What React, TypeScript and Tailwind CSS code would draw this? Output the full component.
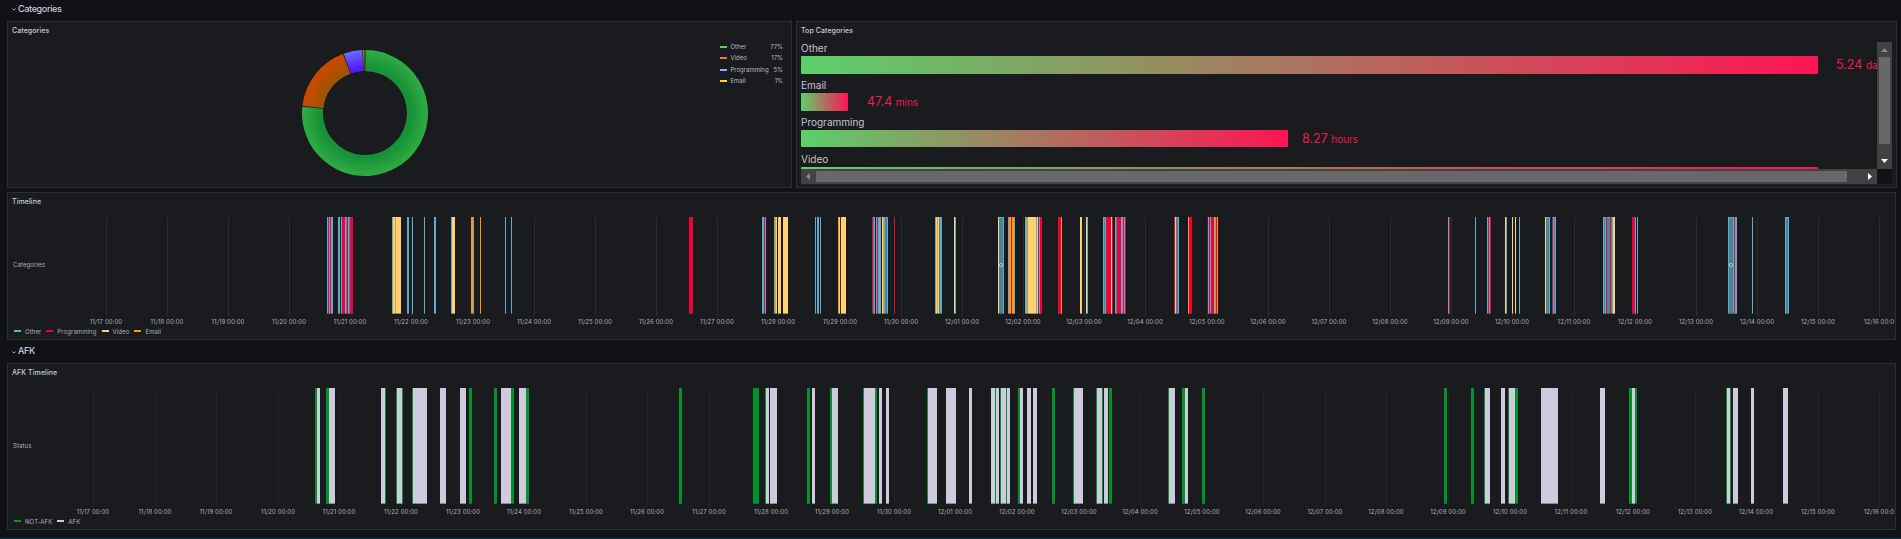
import React from "react";

type Run = [number, string];

const COLORS: Record<string, string> = {
  B: "#5dadcb",
  T: "#4a8597",
  R: "#f2003c",
  Y: "#ffd175",
  O: "#ff990a",
  G: "#00942b",
  W: "#d0cadf",
};

const DATES = [
  "11/17", "11/18", "11/19", "11/20", "11/21", "11/22", "11/23", "11/24", "11/25", "11/26",
  "11/27", "11/28", "11/29", "11/30", "12/01", "12/02", "12/03", "12/04", "12/05", "12/06",
  "12/07", "12/08", "12/09", "12/10", "12/11", "12/12", "12/13", "12/14", "12/15", "12/16",
];

const CATEGORY_TICKS = [
  106, 167, 228, 289, 350, 411, 473, 534, 595, 656, 717, 778, 840, 901, 962, 1023, 1084, 1145,
  1207, 1268, 1329, 1390, 1451, 1512, 1574, 1635, 1696, 1757, 1818, 1879,
];

const AFK_TICKS = [
  93, 155, 216, 278, 339, 401, 463, 524, 586, 647, 709, 771, 832, 894, 955, 1017, 1079, 1140,
  1202, 1263, 1325, 1386, 1448, 1510, 1571, 1633, 1695, 1756, 1818, 1879,
];

const CATEGORY_RUNS: Run[] = [
  [327, "BRBRB2"], [338, "B2"], [341, "BR3BTRBTR3"], [392, "BY2OY5"], [407, "B2"], [412, "B"],
  [424, "B"], [434, "B2"], [451, "BY3"], [471, "O2B"], [480, "O"], [505, "B"], [511, "B"],
  [689, "R4"], [762, "B2RB"], [774, "BOY"], [778, "Y3"], [783, "Y5"], [815, "B"], [817, "B2"],
  [820, "B"], [838, "OY"], [841, "Y5"], [872, "RTB"], [876, "BRB3"], [882, "YOBT2B"],
  [894, "R"], [935, "BYOYTB2"], [954, "YB"], [998, "YT4B"], [1008, "BO2RO2B"],
  [1025, "BOBY8BYRBR2"], [1058, "R3O"], [1080, "Y2"], [1086, "YB"], [1103, "BTBR5YR"],
  [1115, "BTR4B2RBR"], [1174, "RYT2B"], [1188, "OR3"], [1208, "BRBR3OBRO"], [1448, "BR"],
  [1475, "B"], [1487, "BRBR"], [1505, "YB"], [1512, "Y"], [1515, "Y"], [1519, "B"],
  [1545, "YT3B"], [1552, "RBTB"], [1603, "BTBRT3RTBY2"], [1632, "R3B"], [1637, "B"],
  [1728, "BT4BRB2"], [1752, "B"], [1785, "BT2B"],
];

const AFK_RUNS: Run[] = [
  [315, "G2W3"], [326, "G3W6"], [381, "W4G"], [396, "GW5G"], [412, "GW14"], [440, "W6"],
  [460, "W6"], [469, "G3"], [494, "G3"], [501, "W10G3"], [519, "W7G3"], [679, "G3"],
  [753, "G6"], [765, "GW3"], [770, "W7"], [807, "G3"], [812, "W3"], [830, "G2W6"],
  [863, "GW11G2"], [879, "W3"], [886, "W3"], [927, "GW9"], [946, "W10"], [969, "W3"],
  [991, "W4GW3"], [1000, "GW5GW3"], [1018, "G2W3"], [1027, "W4"], [1033, "W4"], [1052, "G3"],
  [1073, "GW9"], [1096, "GW5G"], [1104, "W4"], [1109, "G3"], [1168, "GW6"], [1182, "G3W3"],
  [1202, "G3"], [1444, "G3"], [1471, "G3"], [1484, "GW5"], [1501, "W4"], [1508, "GW6G3"],
  [1541, "W17"], [1600, "W5"], [1629, "G3W3G2"], [1726, "GW3G"], [1733, "W5"], [1751, "W3"],
  [1783, "W5"],
];

function segments(runs: Run[]) {
  const out: { x: number; w: number; c: string }[] = [];
  for (const [start, code] of runs) {
    let x = start;
    for (const m of code.matchAll(/([A-Z])(\d*)/g)) {
      const w = m[2] ? Number(m[2]) : 1;
      out.push({ x, w, c: m[1] });
      x += w;
    }
  }
  return out;
}

function StateTimeline(props: {
  row: string;
  runs: Run[];
  ticks: number[];
  barHeight: number;
  height: number;
  grid: string;
  markers?: number[];
}) {
  const { row, runs, ticks, barHeight, height, grid, markers = [] } = props;
  const labelY = barHeight + 10;
  return (
    <svg
      className="block w-[1887px]"
      height={height}
      viewBox={`8 0 1887 ${height}`}
      fontFamily="Inter, sans-serif"
      fontSize="6"
      fill="#b0b0b9"
      letterSpacing="0.1"
    >
      {ticks.map((x) => (
        <rect key={x} x={x} y={0.5} width={1} height={barHeight + 2} fill={grid} />
      ))}
      {segments(runs).map((s, i) => (
        <g key={i}>
          <rect x={s.x} y={0} width={s.w} height={barHeight} fill={COLORS[s.c]} />
          {s.c === "T" && <rect x={s.x} y={0} width={s.w} height={1} fill={COLORS.B} />}
          <rect x={s.x} y={barHeight - 1} width={s.w} height={1} fill="#1a4a3a" opacity={0.45} />
        </g>
      ))}
      {markers.map((x) => (
        <rect key={x} x={x + 0.5} y={46.5} width={3} height={3} rx={1} fill="none" stroke="#c4dae2" />
      ))}
      <text x={13} y={barHeight / 2 + 1.8}>{row}</text>
      {ticks.map((x, i) => (
        <text key={x} x={x} y={labelY} textAnchor="middle">
          {i === 29 ? "12/16 00:0" : `${DATES[i]} 00:00`}
        </text>
      ))}
    </svg>
  );
}

function Panel({ title, className, children }: { title: string; className: string; children: React.ReactNode }) {
  return (
    <section className={`flex flex-col overflow-hidden border border-[#2d2e33] bg-[#1a1b1f] ${className}`}>
      <h2 className="h-[20px] shrink-0 pl-[4px] pt-[4px] text-[7px] font-medium leading-[10px] tracking-[0.08px] text-[#ccccdc]">
        {title}
      </h2>
      {children}
    </section>
  );
}

function RowTitle({ title, className }: { title: string; className: string }) {
  return (
    <div className={`flex shrink-0 items-center pl-[12px] ${className}`}>
      <svg className="mt-[2px] mr-[2px] h-[3px] w-[4px]" viewBox="0 0 4 3">
        <path d="M0.3 0.6 L2 2 L3.7 0.6" fill="none" stroke="#b5b5bd" strokeWidth="0.9" />
      </svg>
      <h1 className="text-[9px] font-medium leading-[12px] tracking-[-0.35px] text-[#ccccdc]">{title}</h1>
    </div>
  );
}

function Legend({ items }: { items: [string, string][] }) {
  return (
    <div className="flex gap-[5px] pl-[6px] text-[6px] leading-[8px] tracking-[0.1px] text-[#b0b0b9]">
      {items.map(([name, color]) => (
        <div key={name} className="flex items-start gap-[4px]">
          <span className="mt-[2px] h-[2px] w-[7px]" style={{ backgroundColor: color }} />
          {name}
        </div>
      ))}
    </div>
  );
}

function slicePath(from: number, to: number) {
  const pt = (deg: number, r: number) => {
    const a = (deg * Math.PI) / 180;
    return `${64 + r * Math.sin(a)} ${64 - r * Math.cos(a)}`;
  };
  const big = to - from > 180 ? 1 : 0;
  return `M${pt(from, 63)} A63 63 0 ${big} 1 ${pt(to, 63)} L${pt(to, 42)} A42 42 0 ${big} 0 ${pt(from, 42)} Z`;
}

const SLICES = [
  { id: "other", from: 0.5, to: 275.8, inner: "#179238", outer: "#2fad43" },
  { id: "video", from: 276.6, to: 339.5, inner: "#a05400", outer: "#d04700" },
  { id: "prog", from: 340.3, to: 357.5, inner: "#551aff", outer: "#6a6dff" },
  { id: "email", from: 358.1, to: 359.5, inner: "#6e5b00", outer: "#a08c10" },
];

function Donut() {
  return (
    <svg className="h-[128px] w-[128px]" viewBox="0 0 128 128">
      {SLICES.map((s) => (
        <React.Fragment key={s.id}>
          <radialGradient id={s.id} gradientUnits="userSpaceOnUse" cx="64" cy="64" r="63">
            <stop offset="0.72" stopColor={s.inner} />
            <stop offset="1" stopColor={s.outer} />
          </radialGradient>
          <path d={slicePath(s.from, s.to)} fill={`url(#${s.id})`} />
        </React.Fragment>
      ))}
    </svg>
  );
}

const PIE_LEGEND = [
  ["Other", "77%", "#5fd06c", "h-[11px]"],
  ["Video", "17%", "#ff780a", "h-[12px]"],
  ["Programming", "5%", "#8ab0ff", "h-[11px]"],
  ["Email", "1%", "#f2df0c", "h-[10px]"],
];

const GAUGES = [
  { name: "Other", width: 1017, value: "5.24", unit: "days", bar: "h-[18px]", gap: "gap-[18px]" },
  { name: "Email", width: 47, value: "47.4", unit: "mins", bar: "h-[18px]", gap: "gap-[19px]" },
  { name: "Programming", width: 487, value: "8.27", unit: "hours", bar: "h-[17px]", gap: "gap-[14px]" },
  { name: "Video", width: 1017, value: "", unit: "", bar: "h-[18px]", gap: "gap-[18px]" },
];

function TopCategories() {
  return (
    <div className="ml-[4px] grid h-[142px] w-[1091px] grid-cols-[1076px_15px] grid-rows-[127px_15px]">
      <div className="overflow-hidden">
        {GAUGES.map((g) => (
          <div key={g.name} className="h-[37px] whitespace-nowrap">
            <div className="h-[14px] text-[10px] leading-[12px] text-[#c5c5cd]">{g.name}</div>
            <div className={`flex h-[18px] items-start ${g.gap}`}>
              <div
                className={`shrink-0 rounded-[1px] bg-linear-to-r/srgb from-[#5bd06a] to-[#ff1453] ${g.bar}`}
                style={{ width: g.width }}
              />
              {g.value && (
                <div className="h-[17px] text-[12.5px] leading-[17px] text-[#ef1a4f]">
                  {g.value} <span className="text-[10px] leading-none">{g.unit}</span>
                </div>
              )}
            </div>
          </div>
        ))}
      </div>
      <div className="flex flex-col items-center bg-[#424242]">
        <svg className="h-[15px] w-[15px]" viewBox="0 0 15 15">
          <path d="M7.5 6 L11 10 L4 10 Z" fill="#868686" />
        </svg>
        <div className="h-[87px] w-[11px] bg-[#686868]" />
        <svg className="mt-auto h-[15px] w-[15px]" viewBox="0 0 15 15">
          <path d="M4 5 L11 5 L7.5 9 Z" fill="#ffffff" />
        </svg>
      </div>
      <div className="flex items-center bg-[#424242]">
        <svg className="h-[15px] w-[15px]" viewBox="0 0 15 15">
          <path d="M5 7.5 L9 4 L9 11 Z" fill="#868686" />
        </svg>
        <div className="h-[11px] w-[1031px] bg-[#686868]" />
        <svg className="ml-auto h-[15px] w-[15px]" viewBox="0 0 15 15">
          <path d="M10 7.5 L6 4 L6 11 Z" fill="#ffffff" />
        </svg>
      </div>
      <div className="bg-[#121212]" />
    </div>
  );
}

export default function App() {
  return (
    <main className="flex h-[539px] w-[1901px] flex-col overflow-hidden border-b border-[#0b3844] bg-[#111217] font-['Inter',sans-serif]">
      <RowTitle title="Categories" className="h-[21px] pb-[4px]" />
      <div className="flex gap-[4px] pl-[7px]">
        <Panel title="Categories" className="h-[167px] w-[785px]">
          <div className="flex">
            <div className="ml-[293px] mt-[7px]">
              <Donut />
            </div>
            <div className="ml-[291px] pt-[1px]">
              {PIE_LEGEND.map(([name, pct, color, h]) => (
                <div key={name} className={`flex w-[63px] text-[6px] leading-[8px] text-[#b8b8c1] ${h}`}>
                  <span className="mr-[3.5px] mt-[3px] h-[2px] w-[7px] shrink-0" style={{ backgroundColor: color }} />
                  <span>{name}</span>
                  <span className="ml-auto">{pct}</span>
                </div>
              ))}
            </div>
          </div>
        </Panel>
        <Panel title="Top Categories" className="h-[167px] w-[1101px]">
          <TopCategories />
        </Panel>
      </div>
      <Panel title="Timeline" className="ml-[7px] mt-[4px] h-[148px] w-[1889px] shrink-0">
        <div className="pt-[4px]">
          <StateTimeline
            row="Categories"
            runs={CATEGORY_RUNS}
            ticks={CATEGORY_TICKS}
            barHeight={97}
            height={111}
            grid="#2c2d31"
            markers={[999, 1729]}
          />
          <Legend items={[["Other", "#5dadcb"], ["Programming", "#f2003c"], ["Video", "#ffd175"], ["Email", "#ff990a"]]} />
        </div>
      </Panel>
      <RowTitle title="AFK" className="h-[23px] pb-[1px]" />
      <Panel title="AFK Timeline" className="ml-[7px] h-[167px] w-[1889px] shrink-0">
        <div className="pt-[4px]">
          <StateTimeline
            row="Status"
            runs={AFK_RUNS}
            ticks={AFK_TICKS}
            barHeight={116}
            height={130}
            grid="#232428"
          />
          <Legend items={[["NOT-AFK", "#00942b"], ["AFK", "#d0cadf"]]} />
        </div>
      </Panel>
    </main>
  );
}
